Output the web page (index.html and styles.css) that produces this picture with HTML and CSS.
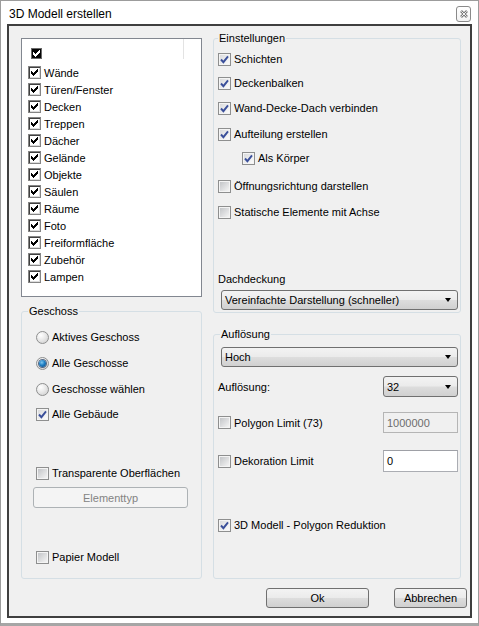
FILE: index.html
```html
<!DOCTYPE html>
<html lang="de">
<head>
<meta charset="utf-8">
<title>3D Modell erstellen</title>
<link rel="stylesheet" href="styles.css">
</head>
<body>
<div class="window">
  <div class="titlebar">
    <span class="title">3D Modell erstellen</span>
    <span class="close"><svg width="8" height="8" viewBox="0 0 8 8"><path d="M1 1L7 7M7 1L1 7" stroke="#7a7a7a" stroke-width="2.6" fill="none"/><path d="M1.3 1.3L6.7 6.7M6.7 1.3L1.3 6.7" stroke="#ffffff" stroke-width="0.9" fill="none"/></svg></span>
  </div>
  <div class="frame">
    <div class="columns">
      <div class="col-left">
        <div class="list">
          <div class="list-header">
            <div class="hdr-cell"><span class="hdr-cb"><svg width="7" height="7" viewBox="0 0 7 7"><path d="M0 2h1v1h1v1h1v-1h1v-1h1v-1h1v-1h1v3h-1v1h-1v1h-1v1h-1v1h-1v-1h-1v-1h-1z" fill="#fff"/></svg></span></div>
          </div>
          <div class="list-items">
            <div class="item"><span class="cbc"><svg width="7" height="7" viewBox="0 0 7 7"><path d="M0 2h1v1h1v1h1v-1h1v-1h1v-1h1v-1h1v3h-1v1h-1v1h-1v1h-1v1h-1v-1h-1v-1h-1z"/></svg></span>Wände</div>
            <div class="item"><span class="cbc"><svg width="7" height="7" viewBox="0 0 7 7"><path d="M0 2h1v1h1v1h1v-1h1v-1h1v-1h1v-1h1v3h-1v1h-1v1h-1v1h-1v1h-1v-1h-1v-1h-1z"/></svg></span>Türen/Fenster</div>
            <div class="item"><span class="cbc"><svg width="7" height="7" viewBox="0 0 7 7"><path d="M0 2h1v1h1v1h1v-1h1v-1h1v-1h1v-1h1v3h-1v1h-1v1h-1v1h-1v1h-1v-1h-1v-1h-1z"/></svg></span>Decken</div>
            <div class="item"><span class="cbc"><svg width="7" height="7" viewBox="0 0 7 7"><path d="M0 2h1v1h1v1h1v-1h1v-1h1v-1h1v-1h1v3h-1v1h-1v1h-1v1h-1v1h-1v-1h-1v-1h-1z"/></svg></span>Treppen</div>
            <div class="item"><span class="cbc"><svg width="7" height="7" viewBox="0 0 7 7"><path d="M0 2h1v1h1v1h1v-1h1v-1h1v-1h1v-1h1v3h-1v1h-1v1h-1v1h-1v1h-1v-1h-1v-1h-1z"/></svg></span>Dächer</div>
            <div class="item"><span class="cbc"><svg width="7" height="7" viewBox="0 0 7 7"><path d="M0 2h1v1h1v1h1v-1h1v-1h1v-1h1v-1h1v3h-1v1h-1v1h-1v1h-1v1h-1v-1h-1v-1h-1z"/></svg></span>Gelände</div>
            <div class="item"><span class="cbc"><svg width="7" height="7" viewBox="0 0 7 7"><path d="M0 2h1v1h1v1h1v-1h1v-1h1v-1h1v-1h1v3h-1v1h-1v1h-1v1h-1v1h-1v-1h-1v-1h-1z"/></svg></span>Objekte</div>
            <div class="item"><span class="cbc"><svg width="7" height="7" viewBox="0 0 7 7"><path d="M0 2h1v1h1v1h1v-1h1v-1h1v-1h1v-1h1v3h-1v1h-1v1h-1v1h-1v1h-1v-1h-1v-1h-1z"/></svg></span>Säulen</div>
            <div class="item"><span class="cbc"><svg width="7" height="7" viewBox="0 0 7 7"><path d="M0 2h1v1h1v1h1v-1h1v-1h1v-1h1v-1h1v3h-1v1h-1v1h-1v1h-1v1h-1v-1h-1v-1h-1z"/></svg></span>Räume</div>
            <div class="item"><span class="cbc"><svg width="7" height="7" viewBox="0 0 7 7"><path d="M0 2h1v1h1v1h1v-1h1v-1h1v-1h1v-1h1v3h-1v1h-1v1h-1v1h-1v1h-1v-1h-1v-1h-1z"/></svg></span>Foto</div>
            <div class="item"><span class="cbc"><svg width="7" height="7" viewBox="0 0 7 7"><path d="M0 2h1v1h1v1h1v-1h1v-1h1v-1h1v-1h1v3h-1v1h-1v1h-1v1h-1v1h-1v-1h-1v-1h-1z"/></svg></span>Freiformfläche</div>
            <div class="item"><span class="cbc"><svg width="7" height="7" viewBox="0 0 7 7"><path d="M0 2h1v1h1v1h1v-1h1v-1h1v-1h1v-1h1v3h-1v1h-1v1h-1v1h-1v1h-1v-1h-1v-1h-1z"/></svg></span>Zubehör</div>
            <div class="item"><span class="cbc"><svg width="7" height="7" viewBox="0 0 7 7"><path d="M0 2h1v1h1v1h1v-1h1v-1h1v-1h1v-1h1v3h-1v1h-1v1h-1v1h-1v1h-1v-1h-1v-1h-1z"/></svg></span>Lampen</div>
          </div>
        </div>

        <div class="group geschoss">
          <div class="group-title">Geschoss</div>
          <div class="opt g1"><span class="radio"></span>Aktives Geschoss</div>
          <div class="opt g2"><span class="radio on"></span>Alle Geschosse</div>
          <div class="opt g3"><span class="radio"></span>Geschosse wählen</div>
          <div class="opt g4"><span class="cb on"><svg width="9" height="9" viewBox="0 0 9 9"><path d="M1 4.5L3.4 7.2L8 1.4" stroke="#3a4f9a" stroke-width="1.9" fill="none"/></svg></span>Alle Gebäude</div>
          <div class="opt g5"><span class="cb"></span>Transparente Oberflächen</div>
          <div class="btn-disabled">Elementtyp</div>
          <div class="opt g6"><span class="cb"></span>Papier Modell</div>
        </div>
      </div>

      <div class="col-right">
        <div class="group einst">
          <div class="group-title">Einstellungen</div>
          <div class="opt e1"><span class="cb on"><svg width="9" height="9" viewBox="0 0 9 9"><path d="M1 4.5L3.4 7.2L8 1.4" stroke="#3a4f9a" stroke-width="1.9" fill="none"/></svg></span>Schichten</div>
          <div class="opt e2"><span class="cb on"><svg width="9" height="9" viewBox="0 0 9 9"><path d="M1 4.5L3.4 7.2L8 1.4" stroke="#3a4f9a" stroke-width="1.9" fill="none"/></svg></span>Deckenbalken</div>
          <div class="opt e3"><span class="cb on"><svg width="9" height="9" viewBox="0 0 9 9"><path d="M1 4.5L3.4 7.2L8 1.4" stroke="#3a4f9a" stroke-width="1.9" fill="none"/></svg></span>Wand-Decke-Dach verbinden</div>
          <div class="opt e4"><span class="cb on"><svg width="9" height="9" viewBox="0 0 9 9"><path d="M1 4.5L3.4 7.2L8 1.4" stroke="#3a4f9a" stroke-width="1.9" fill="none"/></svg></span>Aufteilung erstellen</div>
          <div class="opt e5"><span class="cb on"><svg width="9" height="9" viewBox="0 0 9 9"><path d="M1 4.5L3.4 7.2L8 1.4" stroke="#3a4f9a" stroke-width="1.9" fill="none"/></svg></span>Als Körper</div>
          <div class="opt e6"><span class="cb"></span>Öffnungsrichtung darstellen</div>
          <div class="opt e7"><span class="cb"></span>Statische Elemente mit Achse</div>
          <div class="label dach">Dachdeckung</div>
          <div class="combo wide dach-combo"><span>Vereinfachte Darstellung (schneller)</span></div>
        </div>

        <div class="group aufl">
          <div class="group-title">Auflösung</div>
          <div class="combo wide hoch"><span>Hoch</span></div>
          <div class="row r1"><span class="label">Auflösung:</span><div class="combo small"><span>32</span></div></div>
          <div class="row r2"><div class="opt"><span class="cb"></span>Polygon Limit (73)</div><div class="field disabled">1000000</div></div>
          <div class="row r3"><div class="opt"><span class="cb"></span>Dekoration Limit</div><div class="field">0</div></div>
          <div class="opt r4"><span class="cb on"><svg width="9" height="9" viewBox="0 0 9 9"><path d="M1 4.5L3.4 7.2L8 1.4" stroke="#3a4f9a" stroke-width="1.9" fill="none"/></svg></span>3D Modell - Polygon Reduktion</div>
        </div>
      </div>
    </div>
    <div class="buttons">
      <button class="btn ok">Ok</button>
      <button class="btn cancel">Abbrechen</button>
    </div>
  </div>
</div>
</body>
</html>
```

FILE: styles.css
```css
* { box-sizing: border-box; }
html, body { margin: 0; padding: 0; background: #ffffff; }
body {
  font-family: "Liberation Sans", Arial, sans-serif;
  font-size: 11px;
  color: #000;
}

.window {
  width: 479px;
  height: 626px;
  border: 1px solid #9c9c9c;
  border-bottom: 3px solid #a6a6a6;
  padding-bottom: 5px;
  background: #fff;
  display: flex;
  flex-direction: column;
}

.titlebar {
  height: 23px;
  flex: none;
  display: flex;
  justify-content: space-between;
  align-items: flex-start;
  padding: 0 7px 0 8px;
}
.title { font-size: 12px; line-height: 14px; margin-top: 6px; }
.close {
  width: 15px;
  height: 16px;
  margin-top: 5px;
  border: 1px solid #8a8a8a;
  border-radius: 3px;
  background: linear-gradient(#ffffff, #f3f3f3);
  display: flex;
  align-items: center;
  justify-content: center;
}

.frame {
  height: 594px;
  flex: none;
  margin: 0 6px;
  border: 2px solid #3f3f3f;
  background: #f0f0f0;
  padding: 12px 9px 8px 12px;
  display: flex;
  flex-direction: column;
}

.columns { display: flex; gap: 11px; height: 541px; flex: none; }
.col-left { width: 181px; display: flex; flex-direction: column; }
.col-right { width: 248px; display: flex; flex-direction: column; }

/* list */
.list { height: 259px; flex: none; border: 1px solid #828790; background: #fff; }
.list-header { height: 20px; display: flex; }
.hdr-cell { width: 162px; height: 20px; border-right: 1px solid #e3e3e3; padding: 9px 0 0 9px; }
.hdr-cb {
  width: 11px; height: 11px;
  background: #050505;
  border: 1px solid #6a6a6a;
  display: flex; align-items: center; justify-content: center;
}
.list-items { padding: 5px 0 0 6px; }
.item { height: 17px; display: flex; align-items: center; gap: 3px; }

.cbc {
  width: 13px; height: 13px; flex: none;
  border: 1px solid #858585;
  box-shadow: inset 1px 1px 0 #404040, inset -1px -1px 0 #dcdcdc;
  background: #fff;
  display: flex; align-items: center; justify-content: center;
}
.cbc svg, .hdr-cb svg { shape-rendering: crispEdges; }

/* themed checkbox */
.cb {
  width: 13px; height: 13px; flex: none;
  border: 1px solid #8e8f8f;
  padding: 1px;
  background: linear-gradient(135deg, #c3c5c8, #f4f4f4) content-box, #f4f4f4;
  display: flex; align-items: center; justify-content: center;
}
.cb.on { background: linear-gradient(135deg, #dadbdd, #fbfbfb) content-box, #f4f4f4; }

.radio {
  width: 13px; height: 13px; flex: none;
  border-radius: 50%;
  border: 1px solid #8e8f8f;
  background: radial-gradient(circle at 35% 30%, #ffffff 0%, #e9e9e9 45%, #c9c9c9 100%);
  display: flex; align-items: center; justify-content: center;
}
.radio.on::after {
  content: "";
  width: 7px; height: 7px;
  border-radius: 50%;
  background: radial-gradient(circle at 40% 35%, #7fc8f0 0%, #1f7fc4 45%, #0a3f78 100%);
  box-shadow: 0 0 0 1px rgba(20, 50, 90, 0.7);
}

/* groups */
.group {
  border: 1px solid #d5dfe5;
  border-radius: 3px;
  display: flex;
  flex-direction: column;
  align-items: flex-start;
  flex: none;
}
.group-title { line-height: 13px; margin-top: -7px; padding: 0 1px; background: #f0f0f0; }

.opt { display: flex; align-items: center; gap: 3px; height: 14px; white-space: nowrap; }
.label { line-height: 14px; }

/* Geschoss */
.geschoss { margin-top: 14px; height: 268px; padding-left: 14px; }
.geschoss .group-title { margin-left: -8px; }
.g1 { margin-top: 12px; }
.g2 { margin-top: 12px; }
.g3 { margin-top: 12px; }
.g4 { margin-top: 11px; }
.g5 { margin-top: 45px; }
.g6 { margin-top: 42px; }
.btn-disabled {
  margin-top: 7px;
  margin-left: -3px;
  width: 155px; height: 21px;
  border: 1px solid #adb2b5;
  border-radius: 3px;
  background: #f4f4f4;
  color: #838383;
  display: flex; align-items: center; justify-content: center;
}

/* Einstellungen */
.einst { height: 275px; padding: 0 2px 0 4px; }
.e1 { margin-top: 7px; }
.e2 { margin-top: 10px; }
.e3 { margin-top: 11px; }
.e4 { margin-top: 12px; }
.e5 { margin-top: 10px; margin-left: 24px; }
.e6 { margin-top: 14px; }
.e7 { margin-top: 12px; }
.dach { margin-top: 53px; }
.dach-combo { margin-top: 4px; height: 19px; }

/* combos and fields */
.combo {
  height: 20px;
  border: 1px solid #707070;
  border-radius: 3px;
  background: linear-gradient(#f3f3f3 0%, #ebebeb 48%, #dddddd 52%, #d0d0d0 100%);
  display: flex;
  align-items: center;
  justify-content: space-between;
  padding: 0 6px 0 3px;
  white-space: nowrap;
}
.combo::after {
  content: "";
  border-left: 3.5px solid transparent;
  border-right: 3.5px solid transparent;
  border-top: 4px solid #000;
}
.combo.wide { width: 237px; margin-left: 3px; }
.combo.small { width: 75px; height: 21px; }

.aufl { margin-top: 21px; height: 245px; padding: 0 2px 0 4px; }
.aufl .group-title { margin-left: 2px; }
.hoch { margin-top: 6px; }
.row { align-self: stretch; display: flex; align-items: center; justify-content: space-between; }
.r1 { margin-top: 9px; height: 21px; }
.r2 { margin-top: 15px; height: 21px; }
.r3 { margin-top: 17px; height: 22px; }
.r4 { margin-top: 46px; }

.field {
  width: 75px; height: 100%;
  border: 1px solid #abadb3;
  border-top-color: #9ea0a6;
  background: #fff;
  padding: 0 3px;
  display: flex; align-items: center;
}
.field.disabled { background: #f0f0f0; color: #6d6d6d; border-color: #b5b5b5; }

/* buttons */
.buttons { display: flex; justify-content: flex-end; gap: 25px; margin-top: 9px; margin-right: -6px; }
.btn {
  height: 20px;
  border: 1px solid #707070;
  border-radius: 3px;
  background: linear-gradient(#f3f3f3 0%, #ebebeb 48%, #dddddd 52%, #d0d0d0 100%);
  font-family: inherit;
  font-size: 11px;
  color: #000;
  padding: 0;
}
.ok { width: 103px; }
.cancel { width: 73px; }
```
